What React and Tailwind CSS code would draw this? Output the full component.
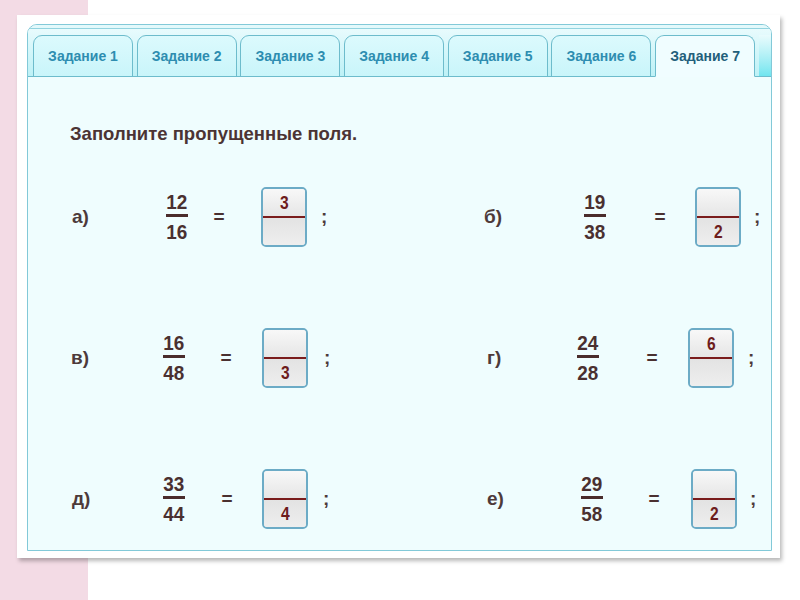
const tabs = ['Задание 1', 'Задание 2', 'Задание 3', 'Задание 4', 'Задание 5', 'Задание 6', 'Задание 7'];

const leftRows = [
  { label: 'а)', num: '12', den: '16', top: '3', bottom: '', labelW: 'w-[94px]', eqMl: 'ml-[23px]', boxMl: 'ml-[36px]', semiMl: 'ml-[14px]', pl: 'pl-[2px]' },
  { label: 'в)', num: '16', den: '48', top: '', bottom: '3', labelW: 'w-[91px]', eqMl: 'ml-[33px]', boxMl: 'ml-[30px]', semiMl: 'ml-[16px]', pl: 'pl-[1px]' },
  { label: 'д)', num: '33', den: '44', top: '', bottom: '4', labelW: 'w-[91px]', eqMl: 'ml-[34px]', boxMl: 'ml-[29px]', semiMl: 'ml-[15px]', pl: 'pl-[2px]' }
];

const rightRows = [
  { label: 'б)', num: '19', den: '38', top: '', bottom: '2', labelW: 'w-[98px]', eqMl: 'ml-[46px]', boxMl: 'ml-[29px]', semiMl: 'ml-[13px]', pl: '' },
  { label: 'г)', num: '24', den: '28', top: '6', bottom: '', labelW: 'w-[91px]', eqMl: 'ml-[45px]', boxMl: 'ml-[30px]', semiMl: 'ml-[14px]', pl: 'pl-[3px]' },
  { label: 'е)', num: '29', den: '58', top: '', bottom: '2', labelW: 'w-[95px]', eqMl: 'ml-[43px]', boxMl: 'ml-[31px]', semiMl: 'ml-[13px]', pl: 'pl-[3px]' }
];

function AnswerBox({ top, bottom }) {
  return (
    <div className="flex h-[60px] w-[46px] flex-col overflow-hidden rounded-[5px] border-2 border-[#6cabc6] bg-[#ececec]">
      <div className="flex h-[27px] items-center justify-center bg-gradient-to-b from-[#f8f8f8] to-[#e6e6e6] text-[19px] font-bold leading-none text-[#6d1c1c]">
        <span className="scale-x-[0.82]">{top}</span>
      </div>
      <div className="h-[2px] bg-[#7a1c1c] shadow-[0_1px_1px_rgba(0,0,0,0.25)]" />
      <div className="flex flex-1 items-center justify-center bg-gradient-to-b from-[#e3e3e3] to-[#eeeeee] text-[19px] font-bold leading-none text-[#6d1c1c]">
        <span className="scale-x-[0.82]">{bottom}</span>
      </div>
    </div>
  );
}

function Row({ row }) {
  return (
    <div className="flex h-[60px] items-center text-[#4a3030]">
      <div className={`${row.labelW} ${row.pl} text-[19px] font-bold leading-[18px] text-[#4d3a3a]`}>{row.label}</div>
      <div className="flex w-[26px] flex-col items-center">
        <div className="h-[20px] scale-x-[0.9] text-[21px] font-bold leading-[20px]">{row.num}</div>
        <div className="mt-[2px] h-[3px] w-[22px] bg-[#4a2c2c]" />
        <div className="mt-[5px] h-[20px] scale-x-[0.9] text-[21px] font-bold leading-[20px]">{row.den}</div>
      </div>
      <div className={`${row.eqMl} w-[12px] text-center text-[19px] font-bold leading-[18px]`}>=</div>
      <div className={row.boxMl}>
        <AnswerBox top={row.top} bottom={row.bottom} />
      </div>
      <div className={`${row.semiMl} text-[19px] font-bold leading-[18px] text-[#4d3a3a]`}>;</div>
    </div>
  );
}

export default function App() {
  return (
    <div className="h-[600px] w-[800px] bg-[linear-gradient(to_right,#f3dbe5_88px,#ffffff_88px)] pl-[17px] pt-[15px] [font-family:'Liberation_Sans',Arial,sans-serif]">
      <div className="h-[543px] w-[763px] bg-white pl-[10px] pt-[9px] shadow-[2px_3px_4px_rgba(0,0,0,0.28)]">
        <div className="flex h-[527px] w-[745px] flex-col overflow-hidden rounded-t-[10px] border border-[#82c9d8] bg-[#effdfe]">
          {/* tab strip */}
          <div className="flex h-[52px] flex-col bg-gradient-to-b from-[#e4f9fb] to-[#c6f3f8]">
            <div className="mx-[2px] mt-[3px] h-px bg-[#92d3df]" />
            <div className="flex flex-1 items-end gap-[3.7px] border-b border-[#6dbccc] bg-[linear-gradient(to_bottom,#e8fbfd,#bdf1f6)] pl-[5px]">
              {tabs.map((tab, i) => {
                const active = i === tabs.length - 1;
                return (
                  <div
                    key={tab}
                    className={`-mb-px flex h-[42px] w-[100px] items-center justify-center rounded-t-[9px] border text-[14px] font-bold ${
                      active
                        ? 'border-[#6dbccc] border-b-[#f0fdff] bg-[#f0fdff] text-[#235f7b]'
                        : 'border-[#6dbccc] bg-gradient-to-b from-[#dcfafd] to-[#c9f5fa] text-[#2e8db0]'
                    }`}
                  >
                    {tab}
                  </div>
                );
              })}
              <div className="mb-[-1px] h-[42px] flex-1 border-b border-[#6dbccc] bg-gradient-to-b from-[#e9fbfd] to-[#6fe5ef]" />
            </div>
          </div>

          {/* content */}
          <div className="pl-[42px] pt-[47px]">
            <h1 className="text-[18.5px] font-bold leading-[20px] text-[#4b3434]">Заполните пропущенные поля.</h1>
            <div className="mt-[43px] grid grid-cols-[414px_1fr]">
              <div className="flex flex-col gap-y-[81px]">
                {leftRows.map((row) => (
                  <Row key={row.label} row={row} />
                ))}
              </div>
              <div className="flex flex-col gap-y-[81px]">
                {rightRows.map((row) => (
                  <Row key={row.label} row={row} />
                ))}
              </div>
            </div>
          </div>
        </div>
      </div>
    </div>
  );
}
